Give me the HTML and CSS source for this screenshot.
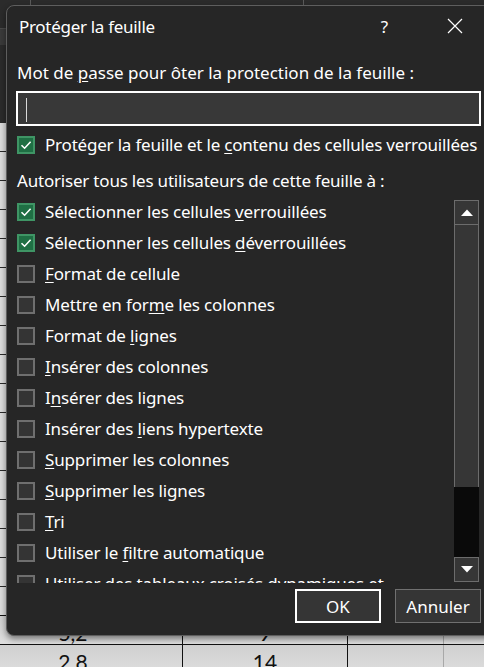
FILE: index.html
```html
<!DOCTYPE html>
<html lang="fr">
<head>
<meta charset="utf-8">
<title>Protéger la feuille</title>
<link rel="stylesheet" href="styles.css">
</head>
<body>
<div class="sheet">
  <div class="ribbon"></div>
  <div class="grid"></div>
  <div class="cells">
    <div class="cell c1">5,2</div>
    <div class="cell c2">9</div>
    <div class="cell c3"></div>
    <div class="cell c4"></div>
  </div>
  <div class="cells cells-last">
    <div class="cell c1">2.8</div>
    <div class="cell c2">14</div>
    <div class="cell c3"></div>
    <div class="cell c4"></div>
  </div>
</div>

<div class="dialog" role="dialog">
  <div class="titlebar">
    <span class="title">Protéger la feuille</span>
    <span class="help">?</span>
    <svg class="close" width="16" height="16" viewBox="0 0 16 16"><path d="M1 1 L15 15 M15 1 L1 15" stroke="#ffffff" stroke-width="1.2" fill="none"/></svg>
  </div>

  <div class="label">Mot de <u>p</u>asse pour ôter la protection de la feuille :</div>
  <div class="input"><span class="caret"></span></div>

  <div class="row row-main">
    <span class="box checked"><svg width="14" height="14" viewBox="0 0 14 14"><path d="M2.5 7.2 L5.6 10.2 L11.6 3.8" stroke="#fff" stroke-width="1.6" fill="none"/></svg></span>
    <span>Protéger la feuille et le <u>c</u>ontenu des cellules verrouillées</span>
  </div>

  <div class="label label-allow">Autoriser tous les utilisateurs de cette feuille à :</div>

  <div class="listwrap">
    <div class="list">
      <div class="row"><span class="box checked"><svg width="14" height="14" viewBox="0 0 14 14"><path d="M2.5 7.2 L5.6 10.2 L11.6 3.8" stroke="#fff" stroke-width="1.6" fill="none"/></svg></span><span>Sélectionner les cellules <u>v</u>errouillées</span></div>
      <div class="row"><span class="box checked"><svg width="14" height="14" viewBox="0 0 14 14"><path d="M2.5 7.2 L5.6 10.2 L11.6 3.8" stroke="#fff" stroke-width="1.6" fill="none"/></svg></span><span>Sélectionner les cellules <u>d</u>éverrouillées</span></div>
      <div class="row"><span class="box"></span><span><u>F</u>ormat de cellule</span></div>
      <div class="row"><span class="box"></span><span>Mettre en for<u>m</u>e les colonnes</span></div>
      <div class="row"><span class="box"></span><span>Format de <u>l</u>ignes</span></div>
      <div class="row"><span class="box"></span><span><u>I</u>nsérer des colonnes</span></div>
      <div class="row"><span class="box"></span><span>I<u>n</u>sérer des lignes</span></div>
      <div class="row"><span class="box"></span><span>Insérer des <u>l</u>iens hypertexte</span></div>
      <div class="row"><span class="box"></span><span><u>S</u>upprimer les colonnes</span></div>
      <div class="row"><span class="box"></span><span><u>S</u>upprimer les lignes</span></div>
      <div class="row"><span class="box"></span><span><u>T</u>ri</span></div>
      <div class="row"><span class="box"></span><span>Utiliser le <u>f</u>iltre automatique</span></div>
      <div class="row"><span class="box"></span><span>Utiliser des tableaux croisés dynamiques et</span></div>
    </div>
    <div class="scrollbar">
      <div class="sb-btn"><svg width="12" height="7" viewBox="0 0 12 7"><path d="M0 7 L6 0.5 L12 7 Z" fill="#fff"/></svg></div>
      <div class="sb-thumb"></div>
      <div class="sb-track"></div>
      <div class="sb-btn"><svg width="12" height="7" viewBox="0 0 12 7"><path d="M0 0 L6 6.5 L12 0 Z" fill="#fff"/></svg></div>
    </div>
  </div>

  <div class="buttons">
    <button class="btn btn-default">OK</button>
    <button class="btn">Annuler</button>
  </div>
</div>
</body>
</html>
```

FILE: styles.css
```css
* { box-sizing: border-box; }

html, body {
  margin: 0;
  padding: 0;
}

body {
  width: 484px;
  height: 667px;
  overflow: hidden;
  position: relative;
  background: #dadada;
  font-family: "Noto Sans", "Open Sans", sans-serif;
}

/* Spreadsheet behind the dialog */
.sheet {
  display: flex;
  flex-direction: column;
  width: 484px;
  height: 667px;
}

.ribbon {
  height: 123px;
  flex: none;
  background-color: #2b2b2b;
  background-image:
    linear-gradient(to right, transparent 30px, #5a5a5a 30px, #5a5a5a 31px, transparent 31px),
    linear-gradient(to right, transparent 303px, #5a5a5a 303px, #5a5a5a 304px, transparent 304px),
    linear-gradient(to bottom, transparent 28px, #4a4a4a 28px, #4a4a4a 29px, #3a3a3a 29px, #3a3a3a 45px, transparent 45px);
}

.grid {
  height: 492px;
  flex: none;
  background-color: #dcdcdc;
  background-image: repeating-linear-gradient(to bottom, transparent 0, transparent 28px, #2a2a2a 28px, #2a2a2a 29px);
}

.cells {
  display: grid;
  grid-template-columns: 183px 165px 96px 1fr;
  height: 29px;
  flex: none;
  border-top: 1px solid #111;
  background: linear-gradient(#d0d0d0, #dedede);
}

.cell {
  font-family: "Lato", "Noto Sans", sans-serif;
  font-size: 21px;
  line-height: 28px;
  color: #111;
  padding-top: 3px;
  text-align: center;
}

.c1 { border-right: 1px solid #111; padding-right: 36px; }
.c2 { border-right: 1px solid #111; }
.c3 { border-right: 1px solid #a8a8a8; }

/* Dialog window */
.dialog {
  position: absolute;
  left: 6px;
  top: 5px;
  width: 490px;
  height: 631px;
  background: #262626;
  border: 1px solid #5e5e5e;
  border-radius: 8px;
  box-shadow: 0 3px 6px rgba(0, 0, 0, 0.45);
  padding: 0 14px 0 9px;
  color: #ffffff;
  font-size: 17px;
  letter-spacing: -0.15px;
  display: flex;
  flex-direction: column;
}

.titlebar {
  height: 40px;
  display: flex;
  align-items: center;
  padding-left: 3px;
  flex: none;
}

.title {
  flex: 1;
  font-size: 17px;
  letter-spacing: -0.3px;
}

.help {
  font-size: 17px;
  margin-right: 59px;
}

.close {
  margin-right: 18px;
}

.label {
  margin-top: 15px;
  line-height: 24px;
  padding-left: 1px;
  white-space: nowrap;
  letter-spacing: 0;
}

.label-allow {
  margin-top: 9px;
  letter-spacing: -0.2px;
}

.input {
  margin-top: 6px;
  height: 35px;
  border: 2px solid #ffffff;
  background: #383838;
  padding: 5px 0 0 8px;
  flex: none;
}

.caret {
  display: block;
  width: 1px;
  height: 24px;
  background: #d8d8d8;
}

.row {
  display: flex;
  align-items: center;
  height: 31px;
  line-height: 31px;
  padding-left: 1px;
  gap: 10px;
  white-space: nowrap;
  flex: none;
}

.row-main {
  margin-top: 3px;
  letter-spacing: -0.2px;
}

.box {
  width: 18px;
  height: 18px;
  flex: none;
  border: 2px solid #6f6f6f;
  background: #343434;
  display: flex;
  align-items: center;
  justify-content: center;
}

.box.checked {
  background: #1f6f44;
  border-color: #3f9565;
}

u {
  text-decoration-thickness: 1px;
  text-underline-offset: 2px;
}

.listwrap {
  margin-top: 3px;
  height: 387px;
  display: flex;
  flex: none;
  overflow: hidden;
}

.list {
  flex: 1;
  overflow: hidden;
}

.scrollbar {
  width: 25px;
  flex: none;
  margin-top: 4px;
  margin-right: 2px;
  height: 382px;
  display: flex;
  flex-direction: column;
}

.sb-btn {
  height: 25px;
  flex: none;
  border: 1px solid #6c6c6c;
  background: #363636;
  display: flex;
  align-items: center;
  justify-content: center;
}

.sb-thumb {
  height: 262px;
  flex: none;
  border: 1px solid #6c6c6c;
  border-top: none;
  border-bottom: none;
  background: #363636;
}

.sb-track {
  flex: 1;
  background: #0a0a0a;
}

.buttons {
  margin-top: 6px;
  display: flex;
  justify-content: flex-end;
  gap: 14px;
  flex: none;
}

.btn {
  width: 86px;
  height: 34px;
  font-family: inherit;
  font-size: 17px;
  letter-spacing: 0;
  color: #ffffff;
  background: #353535;
  border: 1px solid #707070;
  padding: 0;
}

.btn-default {
  border: 2px solid #ffffff;
}
```
